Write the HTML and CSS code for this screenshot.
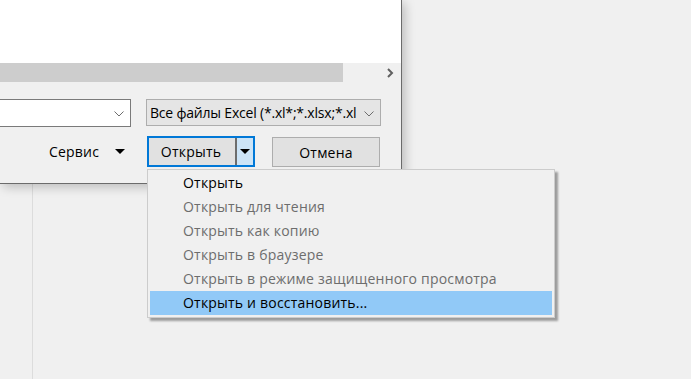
FILE: index.html
```html
<!DOCTYPE html>
<html lang="ru">
<head>
    <meta charset="UTF-8">
    <title>Открытие документа</title>
    <link rel="stylesheet" href="styles.css">
</head>
<body>
    <div class="dialog">
        <div class="preview"></div>
        <div class="hscroll">
            <div class="thumb"></div>
            <span class="scroll-arrow">
                <svg width="7" height="10" viewBox="0 0 7 10"><path d="M1 1 L5 5 L1 9" fill="none" stroke="#606060" stroke-width="2"/></svg>
            </span>
        </div>

        <div class="fields">
            <div class="combo name-combo">
                <span class="combo-text"></span>
                <svg class="chevron" width="10" height="6" viewBox="0 0 10 6"><path d="M0.5 0.5 L5 5 L9.5 0.5" fill="none" stroke="#6d6d6d" stroke-width="1"/></svg>
            </div>
            <div class="combo filter-combo">
                <span class="combo-text">Все файлы Excel (*.xl*;*.xlsx;*.xl</span>
                <svg class="chevron" width="10" height="6" viewBox="0 0 10 6"><path d="M0.5 0.5 L5 5 L9.5 0.5" fill="none" stroke="#6d6d6d" stroke-width="1"/></svg>
            </div>
        </div>

        <div class="actions">
            <div class="tools">Сервис <span class="tri"></span></div>
            <div class="split-button">
                <span class="split-main">Открыть</span>
                <span class="split-arrow"><span class="tri"></span></span>
            </div>
            <button class="btn">Отмена</button>
        </div>
    </div>

    <div class="backdrop">
        <div class="side-column"></div>
    </div>

    <!-- dropdown of the Open button -->
    <ul class="menu">
        <li class="menu-item">Открыть</li>
        <li class="menu-item disabled">Открыть для чтения</li>
        <li class="menu-item disabled">Открыть как копию</li>
        <li class="menu-item disabled">Открыть в браузере</li>
        <li class="menu-item disabled">Открыть в режиме защищенного просмотра</li>
        <li class="menu-item active">Открыть и восстановить...</li>
    </ul>
</body>
</html>
```

FILE: styles.css
```css
html, body {
    height: 100%;
}

body {
    margin: 0;
    background-color: #f0f0f0;
    font-family: 'Open Sans', 'Noto Sans', sans-serif;
    font-size: 14px;
    letter-spacing: 0.2px;
    color: #000;
    display: flex;
    flex-direction: column;
    overflow: hidden;
}

.dialog {
    position: relative;
    z-index: 1;
    width: 402px;
    height: 184px;
    box-sizing: border-box;
    flex-shrink: 0;
    background-color: #f0f0f0;
    border-right: 1px solid #6b6b6b;
    border-bottom: 1px solid #6b6b6b;
    box-shadow: 3px 3px 10px rgba(0, 0, 0, 0.22);
}

.preview {
    height: 63px;
    background-color: #fff;
}

.hscroll {
    height: 19px;
    display: flex;
    align-items: center;
    background-color: #f0f0f0;
}

.thumb {
    width: 343px;
    height: 19px;
    background-color: #cdcdcd;
}

.scroll-arrow {
    margin-left: auto;
    margin-right: 7px;
    display: flex;
}

.fields {
    display: flex;
    gap: 15px;
    padding-top: 17px;
}

.combo {
    height: 28px;
    box-sizing: border-box;
    display: flex;
    align-items: center;
    position: relative;
    overflow: hidden;
}

.name-combo {
    width: 131px;
    background-color: #fff;
    border: 1px solid #7a7a7a;
    border-left: none;
}

.filter-combo {
    width: 235px;
    height: 27px;
    background-color: #e5e5e5;
    border: 1px solid #adadad;
}

.combo-text {
    white-space: nowrap;
    padding-left: 3px;
}

.filter-combo .combo-text {
    letter-spacing: -0.2px;
}

.chevron {
    position: absolute;
    right: 6px;
    top: 11px;
}

.actions {
    display: flex;
    align-items: flex-start;
    padding-top: 9px;
}

.tools {
    margin-left: 49px;
    width: 98px;
    height: 31px;
    display: flex;
    align-items: center;
    gap: 16px;
}

.tri {
    display: inline-block;
    width: 0;
    height: 0;
    border-left: 5px solid transparent;
    border-right: 5px solid transparent;
    border-top: 5px solid #000;
}

.split-button {
    width: 108px;
    height: 31px;
    box-sizing: border-box;
    border: 2px solid #0078d7;
    display: flex;
    background-color: #e5f1fb;
}

.split-main {
    flex: 1;
    display: flex;
    align-items: center;
    justify-content: center;
    background-color: #e1e1e1;
    border-right: 2px solid #6d6d6d;
    padding-right: 2px;
}

.split-arrow {
    width: 16px;
    display: flex;
    align-items: center;
    justify-content: center;
    background-color: #cce4f7;
}

.btn {
    margin-left: 17px;
    margin-top: 1px;
    width: 108px;
    height: 30px;
    background-color: #e1e1e1;
    border: 1px solid #adadad;
    font-family: inherit;
    font-size: 14px;
    letter-spacing: 0.2px;
    color: #000;
    padding: 0;
}

.backdrop {
    flex: 1;
    display: flex;
}

.side-column {
    width: 32px;
    border-right: 1px solid #dcdcdc;
}

/* dropdown menu */
.menu {
    position: absolute;
    z-index: 2;
    left: 147px;
    top: 169px;
    width: 408px;
    height: 149px;
    box-sizing: border-box;
    margin: 0;
    padding: 1px 2px 2px;
    list-style: none;
    background-color: #f0f0f0;
    border: 1px solid #cccccc;
    box-shadow: 3px 3px 2px rgba(0, 0, 0, 0.35);
}

.menu-item {
    height: 24px;
    line-height: 24px;
    padding-left: 33px;
    color: #000;
}

.menu-item.disabled {
    color: #6d6d6d;
}

.menu-item.active {
    background-color: #91c9f7;
}
```
